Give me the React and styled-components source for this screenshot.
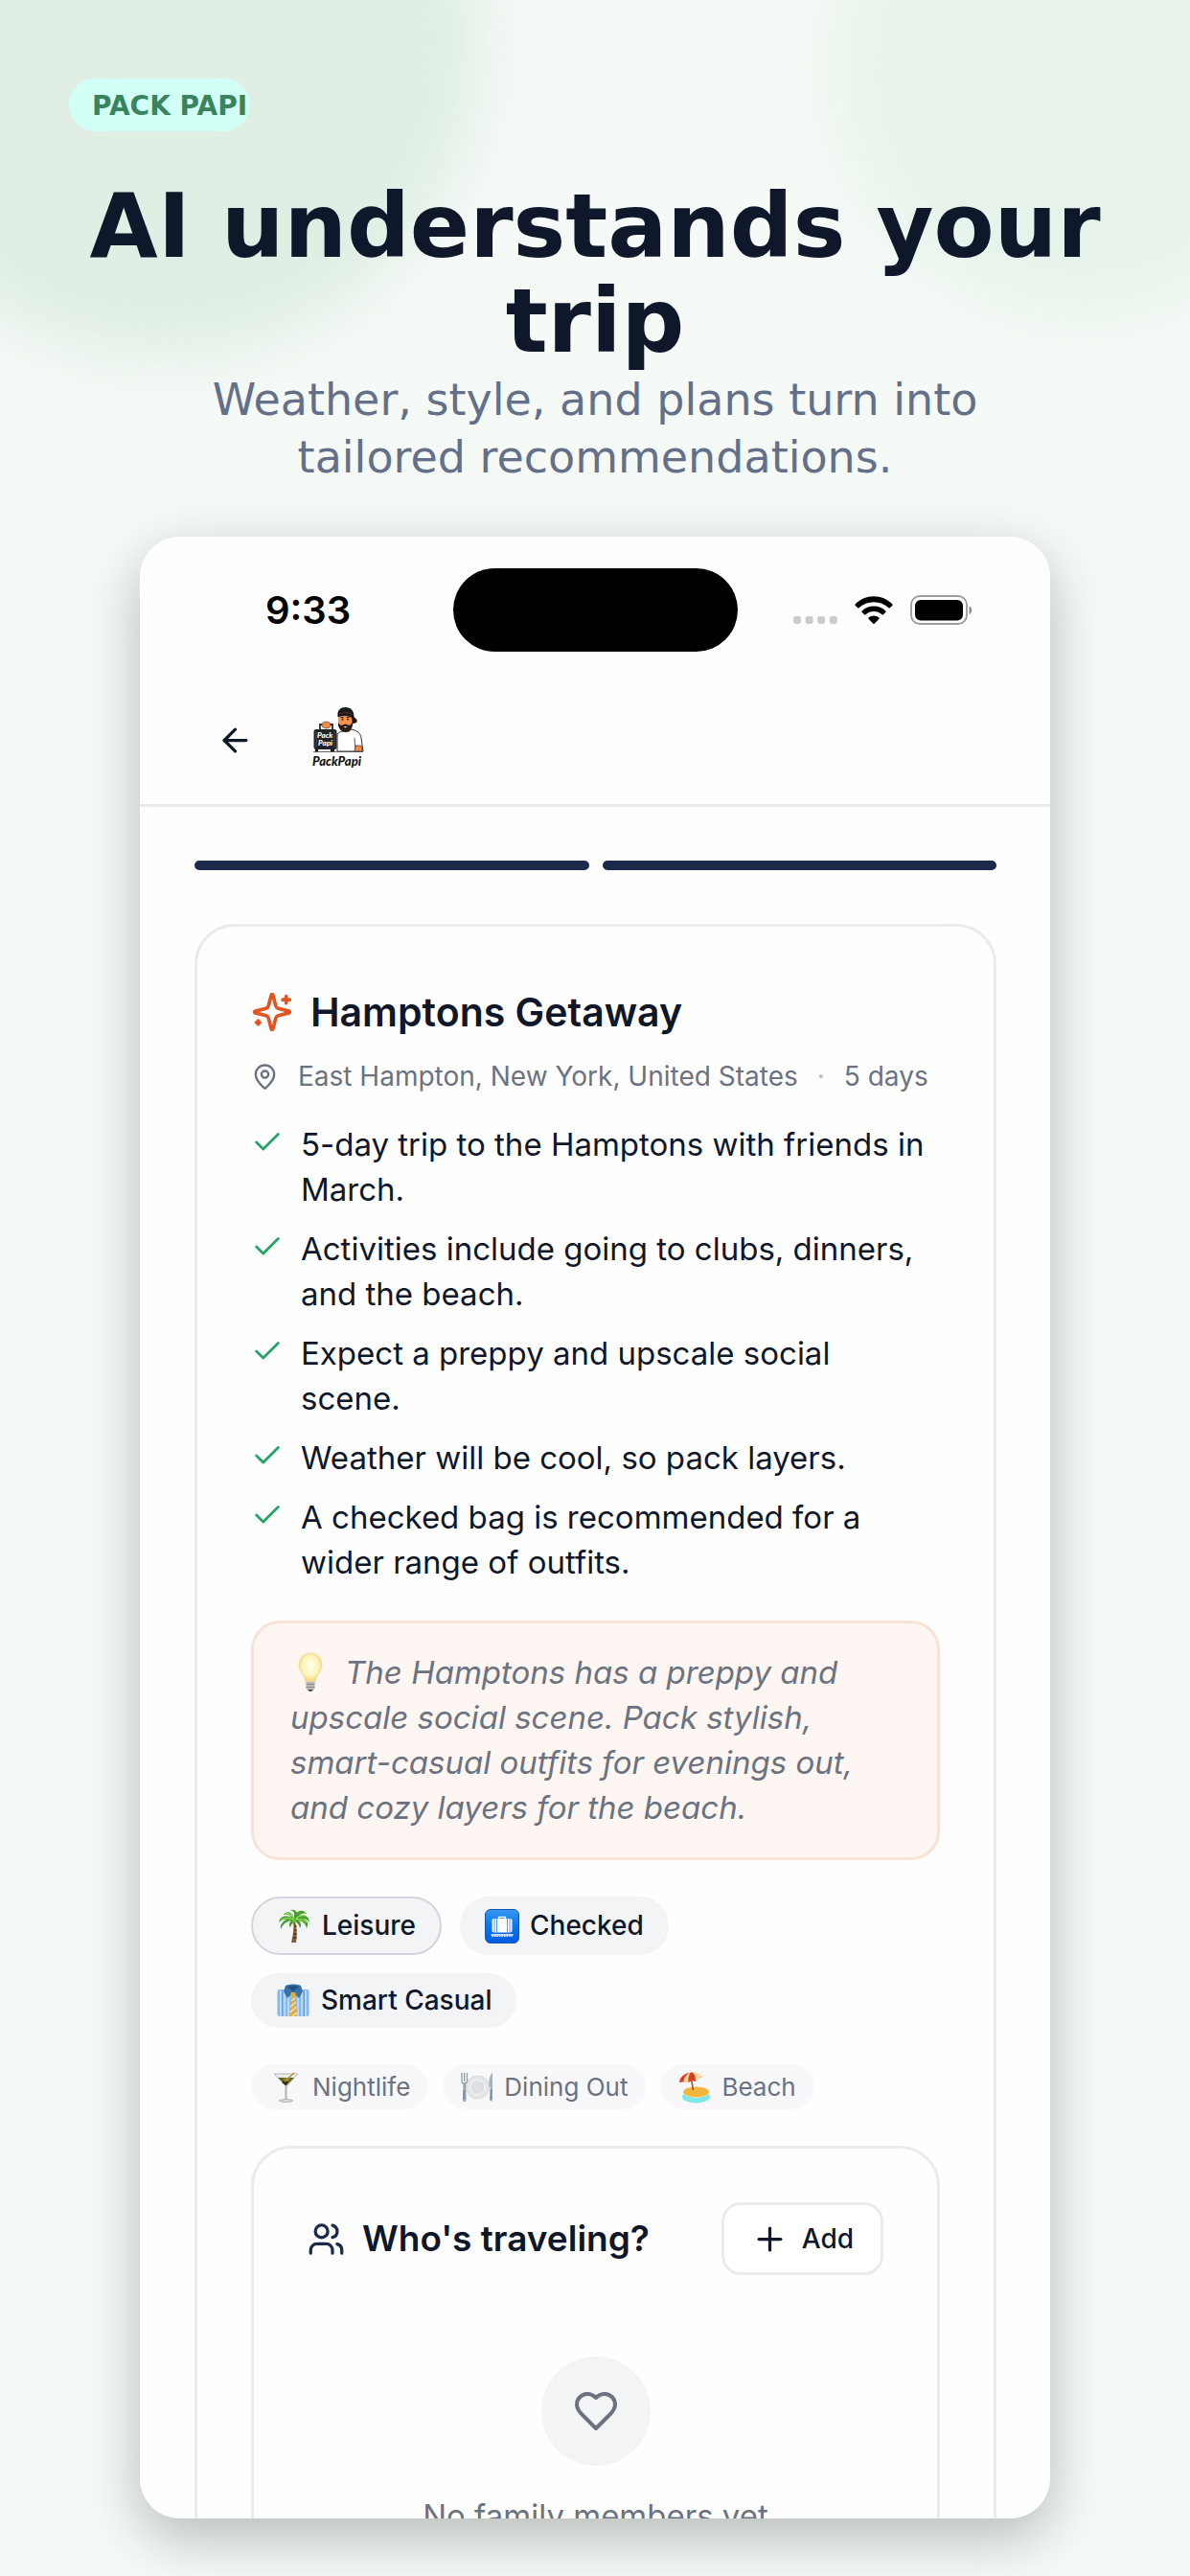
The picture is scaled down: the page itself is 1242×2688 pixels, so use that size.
import React from "react";
import styled, { createGlobalStyle } from "styled-components";
import { ArrowLeft, Check, MapPin, Plus } from "lucide-react";

const GlobalStyle = createGlobalStyle`
  * {
    box-sizing: border-box;
  }

  body {
    margin: 0;
    background: #f5fbf6;
  }
`;

const Page = styled.div`
  position: relative;
  display: flex;
  flex-direction: column;
  align-items: center;
  height: 100vh;
  padding: 82px 72px 60px;
  overflow: hidden;
  background: #f5faf6;
  font-family: "DejaVu Sans", sans-serif;
`;

const Blob = styled.div`
  position: absolute;
  top: ${({ $top }) => $top};
  left: ${({ $left }) => $left};
  right: ${({ $right }) => $right};
  width: ${({ $size }) => $size};
  height: ${({ $size }) => $size};
  border-radius: 50%;
  background: ${({ $color }) => $color};
  filter: blur(30px);
`;

const Brand = styled.div`
  position: relative;
  align-self: flex-start;
  display: flex;
  align-items: center;
  width: 189px;
  height: 55px;
  padding: 2px 0 0 24px;
  border-radius: 28px;
  background: #d1fff6;
  color: #3a835f;
  font-size: 28px;
  font-weight: 700;
  white-space: nowrap;
`;

const Headline = styled.h1`
  position: relative;
  margin: 50px 0 0;
  color: #0f172a;
  font-size: 92px;
  line-height: 99px;
  font-weight: 700;
  text-align: center;
`;

const Subtitle = styled.p`
  position: relative;
  max-width: 900px;
  margin: 2px 0 53px;
  color: #64708a;
  font-size: 46px;
  line-height: 60px;
  text-align: center;
`;

const Phone = styled.main`
  flex: 1;
  min-height: 0;
  overflow: hidden;
  border-radius: 42px;
  background: #fefefe;
  color: #0f172a;
  font-family: Inter, sans-serif;
`;

const PhoneShadow = styled.div`
  position: relative;
  display: flex;
  flex: 1;
  min-height: 0;
  width: 100%;
  max-width: 950px;
  border-radius: 42px;
  box-shadow: 0 20px 60px rgba(0, 0, 0, 0.25);
`;

const StatusBar = styled.div`
  display: grid;
  grid-template-columns: 1fr 297px 1fr;
  align-items: center;
  padding: 33px 0 26px;
`;

const Time = styled.span`
  padding-left: 131px;
  color: #000;
  font-size: 40px;
  line-height: 48px;
  font-weight: 600;
`;

const Island = styled.div`
  height: 87px;
  border-radius: 44px;
  background: #000;
`;

const StatusIcons = styled.div`
  display: flex;
  justify-content: flex-end;
  align-items: center;
  gap: 18px;
  padding-right: 81px;
`;

const Header = styled.header`
  display: flex;
  align-items: center;
  height: 136px;
  padding-left: 80px;
  border-bottom: 3px solid #e7ebed;
`;

const BackButton = styled.button`
  display: flex;
  padding: 0;
  border: none;
  background: none;
  color: #0f172a;
  cursor: pointer;
`;

const Logo = styled.svg`
  width: 90px;
  height: 90px;
  margin: 0 0 16px 43px;
`;

const Content = styled.div`
  padding: 56px 56px 0 57px;
`;

const Steps = styled.div`
  display: grid;
  grid-template-columns: 1fr 1fr;
  gap: 14px;
`;

const Step = styled.div`
  height: 10px;
  border-radius: 5px;
  background: #1b294b;
`;

const Card = styled.section`
  margin-top: ${({ $gap }) => $gap};
  padding: 56px;
  border: 3px solid #e9ebee;
  border-radius: 42px;
`;

const TripTitle = styled.h2`
  display: flex;
  align-items: center;
  gap: 18px;
  margin: 8px 0 0;
  font-size: 41px;
  line-height: 50px;
  font-weight: 600;
`;

const Meta = styled.div`
  display: flex;
  align-items: center;
  gap: 20px;
  margin-top: 22px;
  color: #6b7280;
  font-size: 28px;
  line-height: 40px;
  white-space: nowrap;
`;

const Dot = styled.span`
  color: #b5b9c1;
`;

const Highlights = styled.ul`
  display: flex;
  flex-direction: column;
  gap: 15px;
  margin: 28px 0 0;
  padding: 0 8px 0 0;
  list-style: none;
`;

const Highlight = styled.li`
  display: flex;
  gap: 18px;
  font-size: 33px;
  line-height: 47px;

  svg {
    flex: none;
    margin-top: 4px;
    color: #27a468;
  }
`;

const Tip = styled.p`
  margin: 37px 0 0;
  padding: 28px 38px;
  border: 3px solid #fae2d9;
  border-radius: 30px;
  background: #fdf6f3;
  color: #6b7280;
  font-size: 33px;
  line-height: 47px;
  font-style: italic;

  svg {
    margin-right: 14px;
    vertical-align: -9px;
  }
`;

const Tags = styled.div`
  display: flex;
  flex-wrap: wrap;
  gap: 19px;
  margin-top: 38px;
`;

const Tag = styled.span`
  display: flex;
  align-items: center;
  gap: 11px;
  min-height: 57px;
  padding: ${({ $outlined }) => ($outlined ? "10px 25px" : "8px 26px")};
  border: ${({ $outlined }) => ($outlined ? "2px solid #d3d5de" : "none")};
  border-radius: 31px;
  background: #f3f4f6;
  font-size: 28px;
  line-height: 37px;
  font-weight: 500;
`;

const Activities = styled.div`
  display: flex;
  flex-wrap: wrap;
  gap: 15px;
  margin-top: 38px;
`;

const Activity = styled.span`
  display: flex;
  align-items: center;
  gap: 11px;
  height: 47px;
  padding: 0 19px;
  border-radius: 24px;
  background: #f8f8fa;
  color: #6b7280;
  font-size: 26px;
`;

const TravelersHeader = styled.div`
  display: flex;
  align-items: center;
  gap: 18px;
`;

const TravelersTitle = styled.h3`
  flex: 1;
  margin: 0;
  font-size: 37px;
  line-height: 48px;
  font-weight: 600;
`;

const AddButton = styled.button`
  display: flex;
  align-items: center;
  gap: 14px;
  height: 76px;
  padding: 0 28px;
  border: 3px solid #e9ebee;
  border-radius: 20px;
  background: #fff;
  color: #0f172a;
  font-family: inherit;
  font-size: 28px;
  font-weight: 500;
  cursor: pointer;
`;

const Empty = styled.div`
  display: flex;
  flex-direction: column;
  align-items: center;
  margin-top: 85px;
`;

const HeartCircle = styled.div`
  display: flex;
  align-items: center;
  justify-content: center;
  width: 114px;
  height: 114px;
  border-radius: 50%;
  background: #f3f4f6;
  color: #6b7280;
`;

const EmptyText = styled.p`
  margin: 28px 0 0;
  color: #6b7280;
  font-size: 33px;
  line-height: 48px;
`;

const strokeProps = {
  viewBox: "0 0 24 24",
  fill: "none",
  strokeWidth: 2,
  strokeLinecap: "round",
  strokeLinejoin: "round",
};

function SparklesIcon() {
  return (
    <svg width="44" height="44" stroke="#e25421" {...strokeProps}>
      <path d="M9.937 15.5A2 2 0 0 0 8.5 14.063l-6.135-1.582a.5.5 0 0 1 0-.962L8.5 9.936A2 2 0 0 0 9.937 8.5l1.582-6.135a.5.5 0 0 1 .963 0L14.063 8.5A2 2 0 0 0 15.5 9.937l6.135 1.581a.5.5 0 0 1 0 .964L15.5 14.063a2 2 0 0 0-1.437 1.437l-1.582 6.135a.5.5 0 0 1-.963 0z" />
      <path d="M20 3v4M22 5h-4M4 17v2M5 18H3" />
    </svg>
  );
}

function UsersIcon() {
  return (
    <svg width="39" height="39" stroke="#1b294b" {...strokeProps}>
      <path d="M16 21v-2a4 4 0 0 0-4-4H6a4 4 0 0 0-4 4v2" />
      <circle cx="9" cy="7" r="4" />
      <path d="M22 21v-2a4 4 0 0 0-3-3.87M16 3.13a4 4 0 0 1 0 7.75" />
    </svg>
  );
}

function HeartIcon() {
  return (
    <svg width="48" height="48" stroke="currentColor" {...strokeProps}>
      <path d="M19 14c1.49-1.46 3-3.21 3-5.5A5.5 5.5 0 0 0 16.5 3c-1.76 0-3 .5-4.5 2-1.5-1.5-2.74-2-4.5-2A5.5 5.5 0 0 0 2 8.5c0 2.3 1.5 4.05 3 5.5l7 7Z" />
    </svg>
  );
}

function SignalDots() {
  return (
    <svg width="46" height="30" viewBox="0 0 46 30" fill="#cbcbcb">
      {[0, 12.6, 25.2, 37.8].map((x) => (
        <rect key={x} x={x} y="21" width="8" height="8" rx="2.4" />
      ))}
    </svg>
  );
}

function WifiGlyph() {
  return (
    <svg width="40" height="30" viewBox="0 0 40 30" fill="#000">
      <path d="M.6 8.4C5.900 3.200 12.600.3 20 .3s14.100 2.900 19.400 8.100c.4.400.4.900 0 1.300l-2.600 2.600c-.4.400-.9.400-1.300 0C31.300 8.400 25.900 6.200 20 6.200S8.700 8.400 4.500 12.300c-.4.400-.9.400-1.300 0L.6 9.700c-.4-.4-.4-.9 0-1.300Z" />
      <path d="M7.600 15.400C11 12.200 15.300 10.500 20 10.500s9 1.700 12.400 4.900c.4.400.4.900 0 1.300l-2.500 2.600c-.4.400-.9.400-1.300 0-2.400-2.100-5.300-3.300-8.600-3.300s-6.200 1.200-8.600 3.300c-.4.400-.9.400-1.300 0l-2.500-2.600c-.4-.4-.4-.9 0-1.300Z" />
      <path d="M14.500 22.500c1.500-1.300 3.400-2 5.500-2s4 .7 5.500 2c.4.400.4.900 0 1.300l-4.800 4.900c-.4.400-1 .4-1.400 0l-4.800-4.900c-.4-.4-.4-.9 0-1.300Z" />
    </svg>
  );
}

function BatteryGlyph() {
  return (
    <svg width="65" height="32" viewBox="0 0 65 32">
      <rect x="1" y="1" width="58" height="29" rx="9" fill="none" stroke="#9b9b9b" strokeWidth="1.800" />
      <rect x="5" y="5" width="50" height="21.500" rx="6" fill="#000" />
      <path d="M61.500 11.500c2 .8 2.800 2.400 2.800 4.200s-.8 3.500-2.800 4.300Z" fill="#8f8f8f" />
    </svg>
  );
}

function PackPapiLogo() {
  return (
    <Logo viewBox="0 0 90 90" role="img" aria-label="Pack Papi">
      {/* shirt and arm */}
      <path d="M44 64V46c2-2 4-3 7-3l8-2c7 2 9 4 10 9l2 14Z" fill="#fff" stroke="#333" strokeWidth="1" />
      <path d="M62 50l1 14" stroke="#333" strokeWidth=".8" />
      <path d="M63 58h6l1.500 6H62Z" fill="#ee8b45" stroke="#222" strokeWidth=".6" />
      {/* neck and head */}
      <path d="M49 37h9v5c-2 3-7 3-9 0Z" fill="#e27d38" />
      <path d="M45 26h15v9c-1 5-4 8-7.500 8S46 40 45 35Z" fill="#f2924b" />
      <path d="M45 34.500l3 2.500 4.500-1.500L57 37l3-3.500V37c-1 5-4 7-7.500 7S46 41 45 37Z" fill="#2b1c1a" />
      <path d="M50.500 38h4l-2 1.500Z" fill="#f6d9c6" />
      <circle cx="49.500" cy="30.500" r=".9" fill="#111" />
      <circle cx="55" cy="30.500" r=".9" fill="#111" />
      <path d="M47.500 28.500h3M53.500 28.500h3" stroke="#111" strokeWidth=".8" />
      <circle cx="61" cy="32" r="2" fill="#e27d38" />
      {/* backwards cap */}
      <path d="M44.500 28c-1-7 3-10 8-10 6 0 9 4 9 10l3 3c1 3-2 4-4.500 4l-1-6c-5-3-9-2-14.500-1Z" fill="#18191d" />
      <path d="M46 25c5-2 10-2 14 1" stroke="#6a3a34" strokeWidth=".8" fill="none" />
      {/* suitcase */}
      <path d="M26 42v-6h13v6" fill="none" stroke="#2a2c30" strokeWidth="1.800" />
      <ellipse cx="32.500" cy="36.500" rx="4.500" ry="3.500" fill="#ee8b45" stroke="#222" strokeWidth=".5" />
      <rect x="19.500" y="41" width="24" height="21" rx="2.500" fill="#212226" />
      <path d="M22 43v17M41 43v17" stroke="#5a5d63" strokeWidth=".7" />
      <path d="M21 62h3v2.500h-3ZM37 62h4v2.500h-4Z" fill="#111" />
      <text x="23" y="50" fill="#fff" fontSize="8" fontWeight="900" fontStyle="italic" fontFamily="Lato, sans-serif">Pack</text>
      <text x="24" y="57.500" fill="#fff" fontSize="8" fontWeight="900" fontStyle="italic" fontFamily="Lato, sans-serif">Papi</text>
      <path d="M19 64.500h52" stroke="#444" strokeWidth=".8" />
      <text x="18" y="79" fill="#111" fontSize="13" fontWeight="900" fontStyle="italic" fontFamily="Lato, sans-serif">PackPapi</text>
    </Logo>
  );
}

function BulbIcon() {
  return (
    <svg width="43" height="42" viewBox="0 0 43 42">
      <defs>
        <radialGradient id="bulb" cx=".5" cy=".45" r=".55">
          <stop offset="0" stopColor="#fffef0" />
          <stop offset=".6" stopColor="#fff5bd" />
          <stop offset="1" stopColor="#efd37c" />
        </radialGradient>
      </defs>
      <path d="M21 1c7 0 12 5 12 12 0 6-4 9-6 14l-1 4H16l-1-4C13 22 9 19 9 13 9 6 14 1 21 1Z" fill="url(#bulb)" stroke="#efdc9a" strokeWidth=".8" />
      <path d="M16.500 31h9v6c0 2-2 4-4.500 4s-4.500-2-4.500-4Z" fill="#b9b9b9" />
      <path d="M16.500 33.500h9M16.500 36.500h9" stroke="#8b8b8b" />
      <path d="M18.500 39h5c-.5 1.500-1.500 2-2.500 2s-2-.5-2.500-2Z" fill="#4f4f4f" />
    </svg>
  );
}

function PalmIcon() {
  return (
    <svg width="36" height="36" viewBox="0 0 36 36">
      <path d="M19 13c2 7 2 14 1 22h-5c2-8 3-15 2-22Z" fill="#8a5a30" />
      <path d="M18 18h3M18 22h3M17 26h4M16 30h5" stroke="#4f2f16" strokeWidth="1.200" />
      <path d="M18 9C14 1 9 3 7 6c4-1 7 1 8 3C8 6 3 8 2 14c3-3 5-3 8-3-4 2-7 5-6 10 2-5 6-8 11-9-2 2-3 5-1 7 1-3 3-5 5-6 2 1 4 3 5 7 2-3 1-5-1-8 5 1 7 4 8 8 3-5 0-9-4-10 3 0 5 1 7 4 0-6-5-9-11-7 2-2 5-3 8-2-3-4-8-4-10-1-1-3-4-4-7-3 3 1 4 2 4 5Z" fill="#43a02c" />
      <path d="M18 10C15 6 12 4 9 5M17 11c-5-2-9-2-13 1M20 10c3-3 6-4 9-3M20 11c5-1 8 0 11 3" stroke="#98dc58" strokeWidth="1.300" fill="none" />
      <circle cx="18" cy="12" r="2" fill="#6bc540" />
    </svg>
  );
}

function BaggageIcon() {
  return (
    <svg width="36" height="36" viewBox="0 0 36 36">
      <defs>
        <linearGradient id="sign" x1="0" y1="0" x2="0" y2="1">
          <stop offset="0" stopColor="#3c98f0" />
          <stop offset=".45" stopColor="#0878ee" />
          <stop offset="1" stopColor="#045be0" />
        </linearGradient>
      </defs>
      <rect x=".5" y=".5" width="35" height="35" rx="5.500" fill="url(#sign)" stroke="#0d57b5" />
      <path d="M14.500 10V8.500h7V10" fill="none" stroke="#fff" strokeWidth="1.300" />
      <rect x="7.500" y="10" width="21" height="14.500" rx="2" fill="#fff" />
      <path d="M10 10v14.500M12.500 10v14.500M23.500 10v14.500M26 10v14.500" stroke="#2583e6" strokeWidth=".8" />
      <path d="M6.500 27h23" stroke="#fff" strokeWidth="1.500" />
      <path d="M7.500 28.500h21" stroke="#fff" strokeDasharray="1.500 1" />
    </svg>
  );
}

function ShirtIcon() {
  return (
    <svg width="36" height="36" viewBox="0 0 36 36">
      <rect x="1.500" y="6" width="33" height="28" rx="2" fill="#86b8ee" />
      <path d="M5 7v27M9 8v26M13 12v22M23 12v22M27 8v26M31 7v27" stroke="#c6e1fb" strokeWidth="1.500" />
      <path d="M6.500 7v27M29.500 7v27" stroke="#5d93cf" strokeWidth=".8" />
      <path d="M10 2c5-2 11-2 16 0l2 6-4 7-6-6-6 6-4-7Z" fill="#3672a8" />
      <path d="M12 3c4-1 8-1 12 0l-6 5Z" fill="#1e5180" />
      <path d="M16 9h4l1 4-1.500 2 2.500 19h-8l2.500-19-1.500-2Z" fill="#e2ac40" />
      <path d="M16 18l4-3M15 24l6-5M14.500 30l7-6M17 34l5-4" stroke="#f8e5b5" strokeWidth="1.500" />
    </svg>
  );
}

function CocktailIcon() {
  return (
    <svg width="34" height="34" viewBox="0 0 34 34">
      <path d="M5 3h25L18 16Z" fill="#e8ede9" stroke="#a3aaa5" strokeWidth=".8" />
      <path d="M9 7h17l-8.500 8.500Z" fill="#5c6a1c" />
      <path d="M13 12l4-3 4 1-3.500 5.500Z" fill="#32360e" />
      <ellipse cx="18" cy="9" rx="3.500" ry="2" fill="#8f7a26" />
      <path d="M26 2L16 11" stroke="#b98a45" strokeWidth="1.300" />
      <path d="M17.500 15v15" stroke="#aeb4b6" strokeWidth="2" />
      <path d="M10 31c3-2 12-2 15 0-3 2-12 2-15 0Z" fill="#d4d8da" stroke="#8e9598" strokeWidth=".6" />
    </svg>
  );
}

function PlateIcon() {
  return (
    <svg width="34" height="34" viewBox="0 0 34 34">
      <circle cx="17.500" cy="17" r="12" fill="#e5e6e8" stroke="#d0d1d4" strokeWidth=".8" />
      <circle cx="17.500" cy="17" r="7.500" fill="#dedfe1" stroke="#f6f6f7" strokeWidth="1" />
      <path d="M1 2v8c0 2 1 3 2.200 3L2.500 30c0 2 2.500 2 2.500 0l-.7-17C5.500 13 6.500 12 6.500 10V2M3.700 2v9" fill="none" stroke="#8d9dab" strokeWidth="1.300" />
      <path d="M33 2c-3 2-4 8-3.500 15h1.200L30 30c0 2 3 2 3 0Z" fill="#a5b3c0" />
      <path d="M3.500 20v10M31.500 19v11" stroke="#6f8fae" strokeWidth="1.600" />
    </svg>
  );
}

function BeachIcon() {
  return (
    <svg width="34" height="34" viewBox="0 0 34 34">
      <ellipse cx="18.500" cy="27" rx="14.500" ry="6.500" fill="#7ce8ea" />
      <ellipse cx="18.500" cy="22" rx="13.500" ry="5.500" fill="#f1b53d" />
      <path d="M6 24c6 4 19 4 25 0-3 5-21 5-25 0Z" fill="#fbe3a0" />
      <path d="M13.500 8l2 12" stroke="#8a4d25" strokeWidth="1.500" />
      <path d="M1 12C2 3 15-3 25 6c-3 1-5 2-7 5-3-1-5-1-7 1-3-1-6-1-10 0Z" fill="#e03a26" />
      <path d="M13 1C9 3 6 6 5.500 11.500c2-.3 3.500 0 5 .5C10 7 11 4 13 1ZM14 1c3 2 4 5 4 9.500 2-2.500 4-3.500 7-4.500-2-3-6-5-11-5Z" fill="#f7dc9e" />
    </svg>
  );
}

const highlights = [
  "5-day trip to the Hamptons with friends in March.",
  "Activities include going to clubs, dinners, and the beach.",
  "Expect a preppy and upscale social scene.",
  "Weather will be cool, so pack layers.",
  "A checked bag is recommended for a wider range of outfits.",
];

const tags = [
  { label: "Leisure", Icon: PalmIcon, outlined: true },
  { label: "Checked", Icon: BaggageIcon },
  { label: "Smart Casual", Icon: ShirtIcon },
];

const activities = [
  { label: "Nightlife", Icon: CocktailIcon },
  { label: "Dining Out", Icon: PlateIcon },
  { label: "Beach", Icon: BeachIcon },
];

function Travelers() {
  return (
    <Card $gap="38px">
      <TravelersHeader>
        <UsersIcon />
        <TravelersTitle>Who's traveling?</TravelersTitle>
        <AddButton type="button">
          <Plus size={39} />
          Add
        </AddButton>
      </TravelersHeader>
      <Empty>
        <HeartCircle>
          <HeartIcon />
        </HeartCircle>
        <EmptyText>No family members yet</EmptyText>
      </Empty>
    </Card>
  );
}

function App() {
  return (
    <Page>
      <GlobalStyle />
      <Blob $size="670px" $top="-295px" $left="-165px" $color="#e0eee4" />
      <Blob $size="520px" $top="-190px" $right="-148px" $color="#e7f3ea" />
      <Brand>PACK PAPI</Brand>
      <Headline>AI understands your trip</Headline>
      <Subtitle>Weather, style, and plans turn into tailored recommendations.</Subtitle>

      <PhoneShadow>
        <Phone>
          <StatusBar>
            <Time>9:33</Time>
            <Island />
            <StatusIcons>
              <SignalDots />
              <WifiGlyph />
              <BatteryGlyph />
            </StatusIcons>
          </StatusBar>
          <Header>
            <BackButton type="button" aria-label="Back">
              <ArrowLeft size={39} />
            </BackButton>
            <PackPapiLogo />
          </Header>

          <Content>
            <Steps>
              <Step />
              <Step />
            </Steps>
            <Card $gap="56px">
              <TripTitle>
                <SparklesIcon />
                Hamptons Getaway
              </TripTitle>
              <Meta>
                <MapPin size={29} />
                <span>East Hampton, New York, United States</span>
                <Dot>·</Dot>
                <span>5 days</span>
              </Meta>
              <Highlights>
                {highlights.map((text) => (
                  <Highlight key={text}>
                    <Check size={34} />
                    <span>{text}</span>
                  </Highlight>
                ))}
              </Highlights>
              <Tip>
                <BulbIcon />
                The Hamptons has a preppy and upscale social scene. Pack stylish,
                smart-casual outfits for evenings out, and cozy layers for the beach.
              </Tip>
              <Tags>
                {tags.map(({ label, Icon, outlined }) => (
                  <Tag key={label} $outlined={outlined}>
                    <Icon />
                    {label}
                  </Tag>
                ))}
              </Tags>
              <Activities>
                {activities.map(({ label, Icon }) => (
                  <Activity key={label}>
                    <Icon />
                    {label}
                  </Activity>
                ))}
              </Activities>
              <Travelers />
            </Card>
          </Content>
        </Phone>
      </PhoneShadow>
    </Page>
  );
}

export default App;
